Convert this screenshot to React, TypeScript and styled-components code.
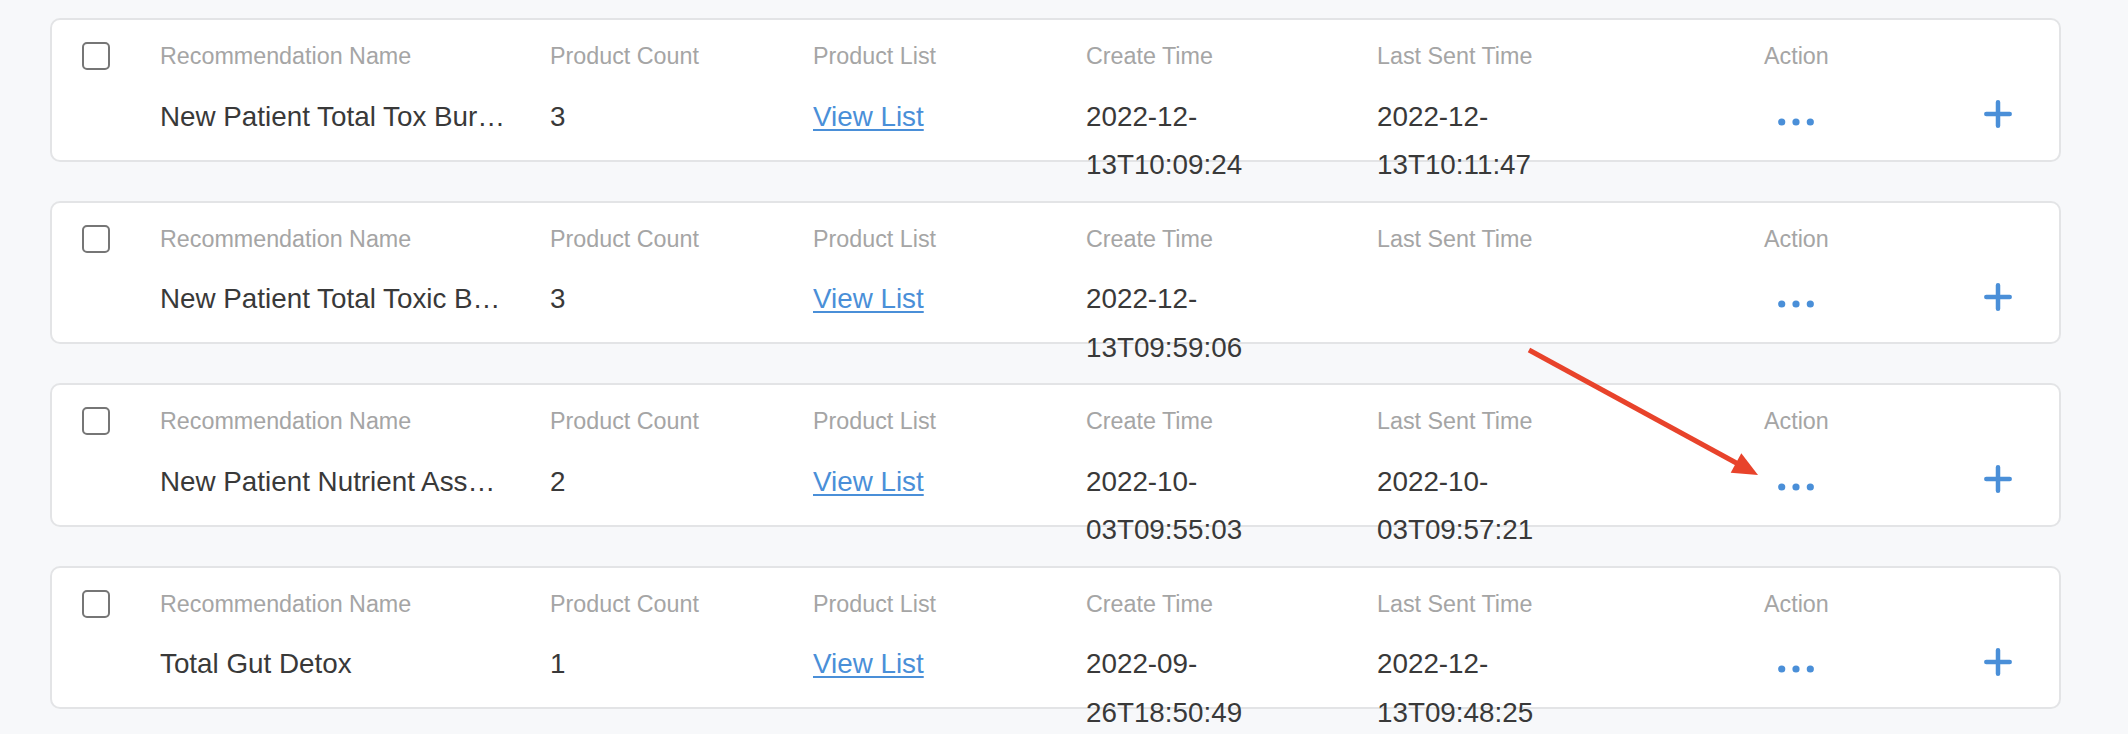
import styled, { createGlobalStyle } from "styled-components";

const GlobalStyle = createGlobalStyle`
  html, body {
    margin: 0;
    padding: 0;
    background: #f7f8fa;
  }
  body {
    font-family: "Liberation Sans", Arial, Helvetica, sans-serif;
  }
`;

interface Recommendation {
  name: string;
  count: number;
  createTime: string;
  lastSentTime?: string;
}

const rows: Recommendation[] = [
  {
    name: "New Patient Total Tox Bur…",
    count: 3,
    createTime: "2022-12-13T10:09:24",
    lastSentTime: "2022-12-13T10:11:47",
  },
  {
    name: "New Patient Total Toxic B…",
    count: 3,
    createTime: "2022-12-13T09:59:06",
  },
  {
    name: "New Patient Nutrient Ass…",
    count: 2,
    createTime: "2022-10-03T09:55:03",
    lastSentTime: "2022-10-03T09:57:21",
  },
  {
    name: "Total Gut Detox",
    count: 1,
    createTime: "2022-09-26T18:50:49",
    lastSentTime: "2022-12-13T09:48:25",
  },
];

// --------------------- LAYOUT ---------------------------------

const Page = styled.div`
  position: relative;
  width: 2128px;
  height: 734px;
  overflow: hidden;
  padding: 18px 0 0 50px;
  box-sizing: border-box;
`;

const List = styled.div`
  display: flex;
  flex-direction: column;
  gap: 39px;
  width: 2011px;
`;

const Card = styled.div`
  display: flex;
  align-items: flex-start;
  height: 143.5px;
  box-sizing: border-box;
  padding: 22px 47px 0 30px;
  background: #ffffff;
  border: 2px solid #e3e4e6;
  border-radius: 10px;
  overflow: visible;
`;

const CheckCell = styled.div`
  width: 28px;
  margin-right: 50px;
  flex-shrink: 0;
`;

const Checkbox = styled.span`
  display: block;
  width: 28px;
  height: 28px;
  box-sizing: border-box;
  border: 2px solid #767676;
  border-radius: 5px;
  background: #fff;
`;

const Cell = styled.div<{ $width?: number; $center?: boolean }>`
  width: ${({ $width }) => ($width ? `${$width}px` : "auto")};
  flex-shrink: 0;
  text-align: ${({ $center }) => ($center ? "center" : "left")};
`;

const Label = styled.div`
  font-size: 23.3px;
  line-height: 28px;
  color: #a5a5a5;
  white-space: nowrap;
  margin-bottom: 22.5px;
`;

const Value = styled.div<{ $wrapWidth?: number }>`
  font-size: 27.8px;
  line-height: 48.5px;
  min-height: 48.5px;
  color: #393939;
  max-width: ${({ $wrapWidth }) => ($wrapWidth ? `${$wrapWidth}px` : "none")};
  white-space: ${({ $wrapWidth }) => ($wrapWidth ? "normal" : "nowrap")};
  overflow: ${({ $wrapWidth }) => ($wrapWidth ? "visible" : "hidden")};
  text-overflow: ellipsis;
`;

const NameValue = styled(Value)`
  max-width: 355px;
`;

const LinkText = styled.a`
  color: #4a8fd8;
  text-decoration: underline;
  text-decoration-thickness: 2px;
  text-underline-offset: 3px;
  cursor: pointer;
`;

const Dots = styled.div`
  display: flex;
  justify-content: center;
  height: 48.5px;
  color: #4a8fd8;
`;

const PlusCell = styled.div`
  flex: 1;
  display: flex;
  justify-content: flex-end;
  align-items: center;
  height: 48.5px;
  margin-top: 48px;
  color: #4a8fd8;
`;

const Annotation = styled.svg`
  position: absolute;
  left: 0;
  top: 0;
  pointer-events: none;
`;

// --------------------- ICONS ---------------------------------

const EllipsisIcon = () => (
  <svg width="36" height="48" viewBox="0 0 36 48">
    <circle cx="3.7" cy="29" r="3.6" fill="currentColor" />
    <circle cx="18" cy="29" r="3.6" fill="currentColor" />
    <circle cx="32.3" cy="29" r="3.6" fill="currentColor" />
  </svg>
);

const PlusIcon = () => (
  <svg width="28" height="28" viewBox="0 0 28 28">
    <path
      d="M2.3 14 H25.7 M14 2.3 V25.7"
      stroke="currentColor"
      strokeWidth="4.5"
      strokeLinecap="round"
      fill="none"
    />
  </svg>
);

// --------------------- ROW ---------------------------------

const RecommendationRow = ({ row }: { row: Recommendation }) => (
  <Card>
    <CheckCell>
      <Checkbox />
    </CheckCell>
    <Cell $width={390}>
      <Label>Recommendation Name</Label>
      <NameValue>{row.name}</NameValue>
    </Cell>
    <Cell $width={263}>
      <Label>Product Count</Label>
      <Value>{row.count}</Value>
    </Cell>
    <Cell $width={273}>
      <Label>Product List</Label>
      <Value>
        <LinkText>View List</LinkText>
      </Value>
    </Cell>
    <Cell $width={291}>
      <Label>Create Time</Label>
      <Value $wrapWidth={190}>{row.createTime}</Value>
    </Cell>
    <Cell $width={387}>
      <Label>Last Sent Time</Label>
      <Value $wrapWidth={190}>{row.lastSentTime ?? ""}</Value>
    </Cell>
    <Cell $center>
      <Label>Action</Label>
      <Dots>
        <EllipsisIcon />
      </Dots>
    </Cell>
    <PlusCell>
      <PlusIcon />
    </PlusCell>
  </Card>
);

export default function App() {
  return (
    <>
      <GlobalStyle />
      <Page>
        <List>
          {rows.map((row, i) => (
            <RecommendationRow key={i} row={row} />
          ))}
        </List>
        <Annotation width="2128" height="734" viewBox="0 0 2128 734">
          <line
            x1="1529"
            y1="350"
            x2="1740"
            y2="465"
            stroke="#e8432b"
            strokeWidth="5"
          />
          <polygon
            points="1758,475 1730.7,472.7 1741.3,453.3"
            fill="#e8432b"
          />
        </Annotation>
      </Page>
    </>
  );
}
